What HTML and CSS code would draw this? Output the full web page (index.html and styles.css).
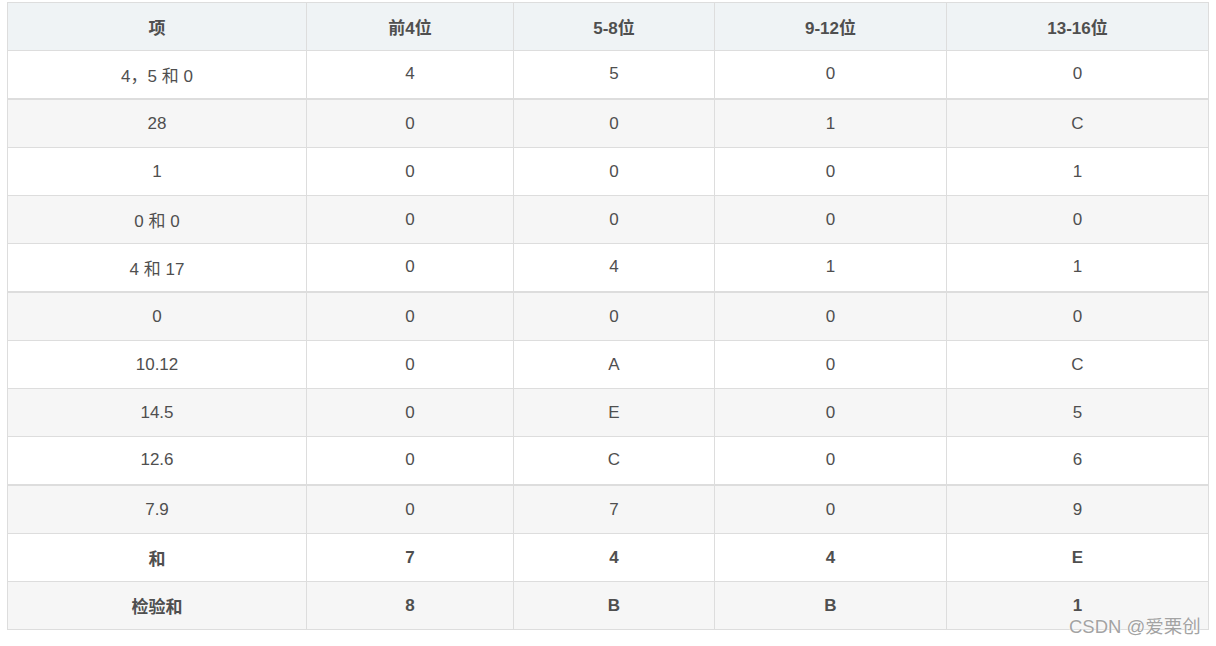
FILE: index.html
```html
<!DOCTYPE html>
<html lang="zh">
<head>
<meta charset="utf-8">
<title>校验和</title>
<link rel="stylesheet" href="styles.css">
</head>
<body>
<div class="page">
<table class="grid">
<colgroup>
<col class="c1"><col class="c2"><col class="c3"><col class="c4"><col class="c5">
</colgroup>
<thead>
<tr><th>项</th><th>前4位</th><th>5-8位</th><th>9-12位</th><th>13-16位</th></tr>
</thead>
<tbody>
<tr><td>4，5 和 0</td><td>4</td><td>5</td><td>0</td><td>0</td></tr>
<tr class="seam"><td>28</td><td>0</td><td>0</td><td>1</td><td>C</td></tr>
<tr><td>1</td><td>0</td><td>0</td><td>0</td><td>1</td></tr>
<tr><td>0 和 0</td><td>0</td><td>0</td><td>0</td><td>0</td></tr>
<tr><td>4 和 17</td><td>0</td><td>4</td><td>1</td><td>1</td></tr>
<tr class="seam"><td>0</td><td>0</td><td>0</td><td>0</td><td>0</td></tr>
<tr><td>10.12</td><td>0</td><td>A</td><td>0</td><td>C</td></tr>
<tr><td>14.5</td><td>0</td><td>E</td><td>0</td><td>5</td></tr>
<tr><td>12.6</td><td>0</td><td>C</td><td>0</td><td>6</td></tr>
<tr class="seam"><td>7.9</td><td>0</td><td>7</td><td>0</td><td>9</td></tr>
<tr class="strong"><td>和</td><td>7</td><td>4</td><td>4</td><td>E</td></tr>
<tr class="strong"><td>检验和</td><td>8</td><td>B</td><td>B</td><td>1</td></tr>
</tbody>
</table>
<div class="mark">CSDN @爱栗创</div>
</div>
</body>
</html>
```
FILE: styles.css
```css
html, body {
  margin: 0;
  padding: 0;
  background: #ffffff;
}
.page {
  position: relative;
  padding: 2px 0 0 7px;
  width: 1216px;
  height: 646px;
  box-sizing: border-box;
  font-family: "Liberation Sans", "Noto Sans CJK SC", sans-serif;
  font-size: 17px;
  color: #4f4f4f;
}
.grid {
  border-collapse: collapse;
  table-layout: fixed;
  width: 1201px;
}
.c1 { width: 299px; }
.c2 { width: 207px; }
.c3 { width: 201px; }
.c4 { width: 232px; }
.c5 { width: 262px; }
.grid th,
.grid td {
  border: 1px solid #dddddd;
  text-align: center;
  vertical-align: middle;
  padding: 0 8px;
  height: 48px;
  box-sizing: border-box;
}
.grid th {
  background: #eff3f5;
  font-weight: bold;
  color: #4f4f4f;
}
.grid tbody tr:nth-child(odd) td { background: #ffffff; }
.grid tbody tr:nth-child(even) td { background: #f6f6f6; }
.grid tr.seam td {
  border-top: 2px solid #dddddd;
  height: 49px;
  padding-top: 1px;
}
.grid tr.strong td {
  font-weight: bold;
}
.mark {
  position: absolute;
  left: 1069px;
  top: 615px;
  font-size: 18.5px;
  line-height: 24px;
  color: #a3a3a3;
  text-shadow: 0 0 2px #ffffff, 0 0 1px #ffffff;
}
```
